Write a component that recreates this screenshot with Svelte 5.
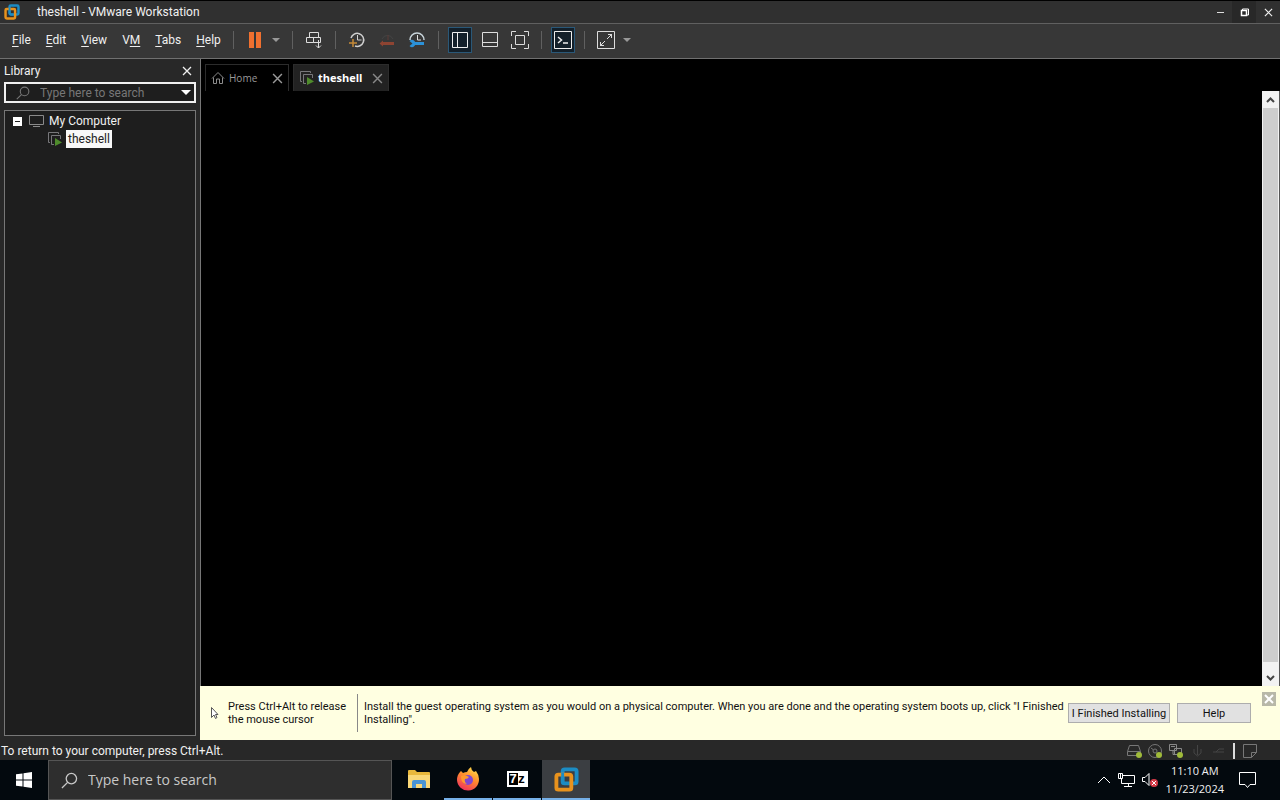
<script>
  const menus = [
    { key: 'F', rest: 'ile' },
    { key: 'E', rest: 'dit' },
    { key: 'V', rest: 'iew' },
    { pre: 'V', key: 'M', rest: '' },
    { key: 'T', rest: 'abs' },
    { key: 'H', rest: 'elp' }
  ];

  let librarySearch = '';
  let taskbarSearch = '';
</script>

{#snippet logo(size)}
  <svg width={size} height={size} viewBox="0 0 26 26" fill="none" aria-hidden="true">
    <rect x="9" y="2.5" width="14.5" height="14.5" rx="2" stroke="#1c8cc4" stroke-width="4" />
    <rect x="2.5" y="8" width="15.5" height="15.5" rx="2" stroke="#e8921d" stroke-width="4" />
    <path d="M9 6v9a2 2 0 0 0 2 2h4" stroke="#1c8cc4" stroke-width="3" />
  </svg>
{/snippet}

{#snippet vmIcon()}
  <svg width="16" height="16" viewBox="0 0 16 16" fill="none" aria-hidden="true">
    <path d="M3 11.5H1.500V1.500h10V3" stroke="#77777a" />
    <path d="M7 13.500H4.500v-9h9V8" stroke="#77777a" />
    <path d="M8 7l7 4.500L8 15z" fill="#4f8b2c" />
  </svg>
{/snippet}

{#snippet cross(size)}
  <svg width={size} height={size} viewBox="0 0 10 10" stroke="currentColor" stroke-width="1.3" aria-hidden="true">
    <path d="M1 1l8 8M9 1L1 9" />
  </svg>
{/snippet}

{#snippet caret()}
  <svg width="8" height="4" viewBox="0 0 8 4" fill="currentColor" aria-hidden="true">
    <path d="M0 0h8L4 4z" />
  </svg>
{/snippet}

{#snippet glass()}
  <svg class="glass" viewBox="0 0 18 18" fill="none" stroke="currentColor" stroke-width="1.4" aria-hidden="true">
    <circle cx="11" cy="7" r="5.500" />
    <path d="M7 11l-6 6" />
  </svg>
{/snippet}

<div class="desktop">
  <header class="titlebar">
    {@render logo(16)}
    <h1>theshell - VMware Workstation</h1>
    <button type="button" class="win-btn" aria-label="Minimize">
      <svg width="9" height="9" stroke="#ddd"><path d="M1 4.500h7" /></svg>
    </button>
    <button type="button" class="win-btn restore" aria-label="Restore">
      <svg width="9" height="9" fill="none" stroke="#fff"><path d="M2.500 2V1h6v6H7" /><path stroke-width="1.500" d="M1.500 2.500h5v5h-5z" /></svg>
    </button>
    <button type="button" class="win-btn" aria-label="Close">{@render cross(9)}</button>
  </header>

  <div class="menubar">
    <nav class="menus">
      {#each menus as menu}
        <button type="button">{menu.pre ?? ''}<u>{menu.key}</u>{menu.rest}</button>
      {/each}
    </nav>
    <div class="toolbar" role="toolbar" aria-label="Virtual machine">
      <span class="sep"></span>
      <button type="button" class="tool" aria-label="Suspend">
        <svg width="14" height="16" fill="#f0702f"><path d="M1 0h5v16H1zM8 0h5v16H8z" /></svg>
      </button>
      <button type="button" class="drop" aria-label="Power options">{@render caret()}</button>
      <span class="sep"></span>
      <button type="button" class="tool" aria-label="Send Ctrl+Alt+Del">
        <svg width="18" height="18" fill="none" stroke="#ddd">
          <path d="M4.500 1.500h9v5h-9zM1.500 6.500h7v5h-7zM8.500 6.500h7v5h-7zM13.500 9v8M11 14.500l2.500 2.500 2.500-2.500" />
        </svg>
      </button>
      <span class="sep"></span>
      <button type="button" class="tool" aria-label="Take snapshot">
        <svg width="18" height="18" fill="none" stroke="#d0d0d0">
          <path d="M3 7a6.500 6.500 0 1 1 4 8" stroke-width="1.500" />
          <path d="M9.500 4v5h4" />
          <path d="M1 12h8M5 8v8" stroke="#c58a38" stroke-width="1.500" />
        </svg>
      </button>
      <button type="button" class="tool" aria-label="Revert snapshot">
        <svg width="18" height="18" fill="none">
          <path d="M4 8a6 6 0 0 1 11 0" stroke="#444" />
          <path d="M10 4v5" stroke="#5c3c38" />
          <path d="M4 12.500h12" stroke="#8e4432" stroke-width="3" />
          <path d="M1.500 12.500L5 9.500v6z" fill="#8e4432" />
        </svg>
      </button>
      <button type="button" class="tool" aria-label="Manage snapshots">
        <svg width="18" height="18" fill="none">
          <path d="M2 9a7 7 0 1 1 14 0" stroke="#c8d4da" stroke-width="1.500" />
          <path d="M9.500 4v5H13" stroke="#ddd" />
          <path d="M6 12.500h10" stroke="#2b91d8" stroke-width="3" />
          <path d="M1.500 10l3 2.500-3 2.500a3.500 3.500 0 1 0 0-5z" fill="#2b91d8" />
        </svg>
      </button>
      <span class="sep"></span>
      <button type="button" class="tool on" aria-label="Show library" aria-pressed="true">
        <svg width="16" height="16" fill="none" stroke="#eee"><path d="M.5.5h15v15H.5zM5.500.5v15" /></svg>
      </button>
      <button type="button" class="tool" aria-label="Thumbnail bar">
        <svg width="16" height="16" fill="none" stroke="#ddd"><path d="M.5.5h15v14H.5zM.5 10.500h15" /></svg>
      </button>
      <button type="button" class="tool" aria-label="Full screen">
        <svg width="20" height="20" fill="none" stroke="#ddd">
          <path d="M1.500 6V1.500H6M14 1.500h4.500V6M18.500 14v4.500H14M6 18.500H1.500V14M5.500 5.500h9v9h-9z" />
        </svg>
      </button>
      <span class="sep"></span>
      <button type="button" class="tool on" aria-label="Console view" aria-pressed="true">
        <svg width="18" height="18" fill="none" stroke="#eee">
          <path d="M.5.5h17v17H.5z" /><path d="M4 6l3.500 3L4 12M9 12h5" stroke-width="1.500" />
        </svg>
      </button>
      <span class="sep"></span>
      <button type="button" class="tool" aria-label="Stretch guest">
        <svg width="18" height="18" fill="none" stroke="#ddd">
          <path d="M.5.5h17v17H.5zM10 8l5-5M11 3.500h3.500V7M8 10l-5 5M3.500 11v3.500H7" />
        </svg>
      </button>
      <button type="button" class="drop" aria-label="Stretch options">{@render caret()}</button>
    </div>
  </div>

  <div class="workspace">
    <aside class="library">
      <div class="library-head">
        <h2>Library</h2>
        <button type="button" class="bare" aria-label="Close library">{@render cross(10)}</button>
      </div>
      <div class="library-search">
        {@render glass()}
        <input type="text" aria-label="Search library" placeholder="Type here to search" bind:value={librarySearch} />
        <button type="button" class="bare" aria-label="Search options">
          <svg width="10" height="5" fill="#fff"><path d="M0 0h10L5 5z" /></svg>
        </button>
      </div>
      <ul class="tree">
        <li>
          <div class="node">
            <button type="button" class="toggle" aria-label="Collapse My Computer"></button>
            <svg width="15" height="12" fill="none" stroke="#8a8a8a" aria-hidden="true">
              <path d="M.5.5h14v9H.5zM4 11.500h7" />
            </svg>
            <span>My Computer</span>
          </div>
          <ul>
            <li class="node child">
              {@render vmIcon()}
              <span class="selected">theshell</span>
            </li>
          </ul>
        </li>
      </ul>
    </aside>

    <main>
      <div class="tabs">
        <div class="tab">
          <svg width="14" height="14" viewBox="0 0 14 14" fill="none" stroke="#8d8d8d" aria-hidden="true">
            <path d="M1 7.500l6-6 6 6M2.500 6.500v6h3V8h3v4.500h3v-6" />
          </svg>
          <a href="#home">Home</a>
          <button type="button" class="bare" aria-label="Close Home">{@render cross(11)}</button>
        </div>
        <div class="tab active">
          {@render vmIcon()}
          <a href="#theshell">theshell</a>
          <button type="button" class="bare" aria-label="Close theshell">{@render cross(11)}</button>
        </div>
      </div>

      <div class="console">
        <div class="screen"></div>
        <div class="scrollbar">
          <button type="button" class="bare" aria-label="Scroll up">
            <svg width="9" height="6" fill="none" stroke="#444" stroke-width="2"><path d="M1 5l3.500-3.500L8 5" /></svg>
          </button>
          <div class="thumb"></div>
          <button type="button" class="bare" aria-label="Scroll down">
            <svg width="9" height="6" fill="none" stroke="#444" stroke-width="2"><path d="M1 1l3.500 3.500L8 1" /></svg>
          </button>
        </div>
      </div>

      <div class="notice">
        <svg class="pointer" width="9" height="14" fill="#fff" stroke="#555" aria-hidden="true">
          <path d="M1.500 1.500v10L4 9l1.500 3.500 1.500-1L5.500 8.500H8z" />
        </svg>
        <p class="release">Press Ctrl+Alt to release the mouse cursor</p>
        <p class="install">
          Install the guest operating system as you would on a physical computer. When you are done and
          the operating system boots up, click "I Finished Installing".
        </p>
        <button type="button" class="push finished">I Finished Installing</button>
        <button type="button" class="push help">Help</button>
        <button type="button" class="dismiss" aria-label="Dismiss">
          <svg width="10" height="10" stroke="#fff" stroke-width="2"><path d="M1 1l8 8M9 1L1 9" /></svg>
        </button>
      </div>
    </main>
  </div>

  <footer class="status">
    <span>To return to your computer, press Ctrl+Alt.</span>
    <div class="devices">
      <svg width="17" height="16" fill="none" stroke="#777">
        <path d="M1.500 8.500l2-6h9l2 6v4h-13zM1.500 8.500h13" /><circle cx="13" cy="12" r="3" fill="#a0bb3a" stroke="none" />
      </svg>
      <svg width="17" height="16" fill="none" stroke="#777">
        <circle cx="8" cy="8" r="6.500" /><circle cx="8" cy="8" r="2" /><path d="M4 5l2 1.500" />
        <circle cx="12" cy="12" r="3" fill="#a0bb3a" stroke="none" />
      </svg>
      <svg width="17" height="16" fill="none" stroke="#888">
        <path d="M1.500 1.500h7v6h-7zM5 7.500v4h4M6.500 5.500h7v6h-7zM3 3.500h4" /><circle cx="12" cy="12" r="3" fill="#a0bb3a" stroke="none" />
      </svg>
      <svg width="17" height="16" fill="none" stroke="#454545"><path d="M8.500 2v10M5 6v4l3.500 3L12 10V6" /></svg>
      <svg width="17" height="16" fill="none" stroke="#454545"><path d="M3 9h3l3-3h5M6 9h8" /></svg>
      <span class="divider"></span>
      <svg width="14" height="14" fill="none" stroke="#777"><path d="M.5.5h13v8l-5 5h-8zM13.500 8.500h-5v5" /></svg>
    </div>
  </footer>

  <div class="taskbar">
    <button type="button" class="start" aria-label="Start">
      <svg width="16" height="16" fill="#fff">
        <path d="M0 2.300l6.500-.9v6.100H0zM7.500 1.200L16 0v7.500H7.500zM0 8.500h6.500v6.100L0 13.700zM7.500 8.500H16V16l-8.500-1.200z" />
      </svg>
    </button>
    <label class="task-search">
      {@render glass()}
      <input type="text" aria-label="Search Windows" placeholder="Type here to search" bind:value={taskbarSearch} />
    </label>
    <div class="apps">
      <button type="button" class="app" aria-label="File Explorer">
        <svg width="22" height="20">
          <path d="M0 2q0-1 1-1h6l2 2h12q1 0 1 1v15H0z" fill="#e9b83c" />
          <path d="M0 6h22v13H0z" fill="#fad878" />
          <path d="M4 19v-6q0-2 2-2h10q2 0 2 2v6h-4v-4H8v4z" fill="#4a94d4" />
        </svg>
      </button>
      <button type="button" class="app open" aria-label="Firefox">
        <svg width="24" height="24" viewBox="0 0 24 24">
          <defs>
            <linearGradient id="fox" x1=".8" y1="0" x2=".3" y2="1">
              <stop offset="0" stop-color="#ffe14d" />
              <stop offset=".45" stop-color="#ff8f2c" />
              <stop offset="1" stop-color="#f0315e" />
            </linearGradient>
          </defs>
          <path d="M5 4l2 2q2-1 4-1 1-3 4-5 0 3 3 5l2-1q3 4 3 8a11 11 0 0 1-22 1q0-5 3-8z" fill="url(#fox)" />
          <circle cx="12" cy="13" r="5" fill="#8046cf" />
          <path d="M5 9q4-2 8 1-1 2-4 2-1 3 2 5-6 0-6-8z" fill="#ff9a2c" />
        </svg>
      </button>
      <button type="button" class="app open" aria-label="7-Zip">
        <span class="zip"><b>7</b><i>z</i></span>
      </button>
      <button type="button" class="app open current" aria-label="VMware Workstation">{@render logo(25)}</button>
    </div>
    <div class="tray">
      <button type="button" class="bare" aria-label="Show hidden icons">
        <svg width="14" height="8" fill="none" stroke="#fff"><path d="M1 7l6-6 6 6" /></svg>
      </button>
      <button type="button" class="bare" aria-label="Network">
        <svg width="17" height="15" fill="none" stroke="#fff">
          <path d="M5 2.500h11.500v8H3.500V6M.5.5h4v5h-4zM2.500.5v5M10.500 10.500v3M6 13.500h8" />
        </svg>
      </button>
      <button type="button" class="bare" aria-label="Volume muted">
        <svg width="17" height="16" fill="none" stroke="#fff">
          <path d="M.5 5.500H3l4-4v12l-4-4H.5z" />
          <circle cx="12" cy="11" r="4" fill="#d63a48" stroke="none" />
          <path d="M10 9l4 4M14 9l-4 4" />
        </svg>
      </button>
      <button type="button" class="clock"><span>11:10 AM</span><span>11/23/2024</span></button>
      <button type="button" class="bare" aria-label="Notifications">
        <svg width="17" height="17" fill="none" stroke="#fff"><path d="M.5.5h16v12H11L8.500 15.500 6 12.500H.5z" /></svg>
      </button>
    </div>
  </div>
</div>

<style>
  :global(body) {
    background: #000;
  }

  .desktop {
    display: flex;
    flex-direction: column;
    min-height: 100vh;
    color: #f0f0f0;
    background: #282828;
    font-family: Roboto, 'Open Sans', sans-serif;
    font-size: 12px;
    line-height: 16px;
  }

  .desktop * {
    box-sizing: border-box;
  }

  svg {
    display: block;
    flex: none;
  }

  button {
    padding: 0;
    border: 0;
    background: none;
    color: inherit;
    font: inherit;
  }

  .bare {
    display: flex;
    align-items: center;
    justify-content: center;
  }

  h1,
  h2,
  p,
  ul {
    margin: 0;
    padding: 0;
    font-size: inherit;
    font-weight: normal;
    list-style: none;
  }

  input {
    flex: 1;
    min-width: 0;
    padding: 0;
    border: 0;
    outline: 0;
    background: none;
    color: inherit;
    font: inherit;
  }

  input::placeholder {
    color: inherit;
    opacity: 1;
  }

  .titlebar {
    display: flex;
    align-items: center;
    height: 24px;
    padding-left: 4px;
    border-top: 1px solid #000;
    border-bottom: 1px solid #606060;
    background: #303030;
  }

  .titlebar h1 {
    flex: 1;
    margin-left: 17px;
  }

  .win-btn {
    display: flex;
    align-items: center;
    justify-content: center;
    width: 24px;
    height: 22px;
  }

  .restore {
    background: #282828;
  }

  .menubar {
    display: flex;
    height: 35px;
    padding-bottom: 2px;
    border-bottom: 1px solid #707070;
    background: #373737;
  }

  .menus {
    display: flex;
    flex: none;
    gap: 15px;
    width: 227px;
    padding-left: 12px;
  }

  .menus u {
    text-underline-offset: 2px;
  }

  .toolbar {
    display: flex;
    align-items: center;
  }

  .sep {
    width: 1px;
    height: 18px;
    margin: 0 6px;
    background: #606060;
  }

  .tool {
    display: flex;
    align-items: center;
    justify-content: center;
    width: 24px;
    height: 26px;
    margin: 0 3px;
  }

  .tool.on {
    border: 1px solid #2a5878;
    background: #14202a;
  }

  .drop {
    display: flex;
    align-items: center;
    justify-content: center;
    width: 12px;
    height: 26px;
    color: #999;
  }

  .drop + .sep {
    margin-left: 10px;
  }

  .workspace {
    display: flex;
    flex: 1;
  }

  .library {
    display: flex;
    flex: none;
    flex-direction: column;
    width: 200px;
    padding: 0 4px 4px;
  }

  .library-head {
    display: flex;
    align-items: center;
    justify-content: space-between;
    height: 23px;
    padding-right: 4px;
  }

  .library-search {
    display: flex;
    align-items: center;
    height: 21px;
    padding: 0 3px 0 10px;
    border: 2px solid #f0f0f0;
    background: #1e1e1e;
    color: #777;
  }

  .glass {
    width: 14px;
    height: 14px;
    margin-right: 10px;
  }

  .tree {
    flex: 1;
    margin-top: 7px;
    padding: 1px 0 0 8px;
    border: 1px solid #777;
    background: #1e1e1e;
  }

  .node {
    display: flex;
    align-items: center;
    height: 18px;
  }

  .node > span {
    margin-left: 5px;
  }

  .toggle {
    width: 9px;
    height: 9px;
    margin-right: 7px;
    border: solid #fff;
    border-width: 4px 2px;
    background: #222;
  }

  .child {
    padding-left: 34px;
  }

  .node > .selected {
    margin-left: 3px;
    padding: 1px 2px;
    background: #f8f8f8;
    color: #222;
  }

  main {
    display: flex;
    flex: 1;
    flex-direction: column;
    min-width: 0;
    background: #000;
  }

  .tabs {
    display: flex;
    gap: 4px;
    height: 32px;
    padding: 5px 0 0 4px;
    border-left: 1px solid #777;
  }

  .tab {
    display: flex;
    align-items: center;
    width: 84px;
    padding: 0 5px;
    border: 1px solid #2c2c2c;
    border-bottom: 0;
    color: #999;
    font-family: 'Open Sans', 'Noto Sans', sans-serif;
    font-size: 10px;
  }

  .tab a {
    flex: 1;
    margin-left: 4px;
    color: inherit;
    text-decoration: none;
  }

  .tab.active {
    width: 96px;
    background: #222;
    color: #888;
    font-size: 11px;
  }

  .tab.active a {
    margin-left: 3px;
    color: #fff;
    font-weight: bold;
  }

  .console {
    display: flex;
    flex: 1;
    border-left: 1px solid #777;
  }

  .screen {
    flex: 1;
  }

  .scrollbar {
    display: flex;
    flex-direction: column;
    width: 18px;
    border-right: 1px solid #555;
    background: #f2f2f2;
  }

  .scrollbar button {
    height: 17px;
  }

  .thumb {
    flex: 1;
    margin: 0 1px 7px;
    background: #cdcdcd;
  }

  .notice {
    display: flex;
    align-items: center;
    min-height: 54px;
    padding: 0 4px 0 10px;
    background: #ffffe1;
    color: #111;
    font-size: 11px;
    line-height: 13px;
  }

  .release {
    flex: none;
    width: 129px;
    margin-left: 9px;
  }

  .install {
    flex: 1;
    padding: 6px 0 6px 6px;
    border-left: 1px solid #888;
  }

  .push {
    flex: none;
    height: 20px;
    border: 1px solid #adadad;
    background: #e1e1e1;
  }

  .finished {
    width: 102px;
  }

  .help {
    width: 74px;
    margin-left: 7px;
  }

  .dismiss {
    display: flex;
    align-items: center;
    align-self: flex-start;
    justify-content: center;
    width: 14px;
    height: 14px;
    margin: 6px 0 0 11px;
    background: #b8b8a8;
  }

  .status {
    display: flex;
    align-items: center;
    justify-content: space-between;
    height: 20px;
    padding: 2px 23px 0 1px;
  }

  .devices {
    display: flex;
    align-items: center;
    gap: 4px;
  }

  .divider {
    width: 2px;
    height: 16px;
    margin: 0 4px 0 2px;
    background: #ddd;
  }

  .taskbar {
    display: flex;
    height: 40px;
    background: #03090e;
  }

  .start {
    display: flex;
    align-items: center;
    justify-content: center;
    width: 48px;
  }

  .task-search {
    display: flex;
    align-items: center;
    width: 344px;
    padding-left: 12px;
    border: 1px solid #555;
    background: #2e2e2e;
    color: #c8c8c8;
    font-family: 'Open Sans', 'Noto Sans', sans-serif;
    font-size: 14px;
  }

  .task-search .glass {
    width: 17px;
    height: 17px;
  }

  .apps {
    display: flex;
    gap: 1px;
    padding-left: 3px;
  }

  .app {
    display: flex;
    align-items: center;
    justify-content: center;
    width: 48px;
    border-bottom: 2px solid transparent;
  }

  .app.open {
    border-bottom-color: #76b0e8;
  }

  .app.current {
    background: #3b3e42;
  }

  .zip {
    display: flex;
    align-items: center;
    width: 21px;
    height: 16px;
    padding: 2px;
    background: #fff;
    font-family: 'Liberation Sans', sans-serif;
    font-size: 13px;
    font-weight: bold;
    line-height: 12px;
  }

  .zip b {
    width: 9px;
    background: #000;
    color: #fff;
  }

  .zip i {
    flex: 1;
    color: #000;
    font-style: normal;
  }

  .tray {
    display: flex;
    align-items: center;
    gap: 7px;
    margin-left: auto;
    padding-right: 24px;
  }

  .clock {
    display: flex;
    flex-direction: column;
    align-items: center;
    font-family: 'Open Sans', 'Noto Sans', sans-serif;
    font-size: 11px;
    line-height: 18px;
  }

  .clock + button {
    margin-left: 8px;
  }
</style>
